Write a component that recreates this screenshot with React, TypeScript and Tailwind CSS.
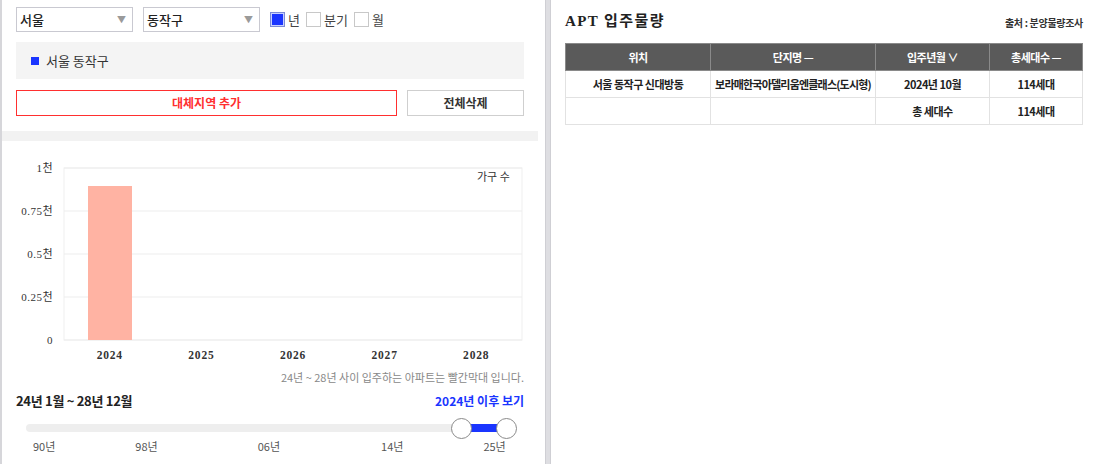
import { useState } from 'react';

const sans = "font-['Noto_Sans_CJK_KR','Noto_Sans',sans-serif]";

const years = ['2024', '2025', '2026', '2027', '2028'];
const yTicks = [
    { label: '1천', y: 27 },
    { label: '0.75천', y: 70 },
    { label: '0.5천', y: 113 },
    { label: '0.25천', y: 156 },
    { label: '0', y: 199 },
];

const Select = ({ value }: { value: string }) => (
    <div className="flex items-center justify-between w-[117px] h-[25px] border border-[#c9c9d1] bg-white pl-[3px] pr-[6px]">
        <span className="text-[13px] font-medium text-[#222]">{value}</span>
        <span className="text-[9px] text-[#9a9a9a]">▼</span>
    </div>
);

const Check = ({ label, checked }: { label: string; checked?: boolean }) => (
    <label className="flex items-center gap-[3px]">
        <span
            className={
                checked
                    ? 'w-[15px] h-[15px] border border-[#7b8bd6] bg-[#1a35ff] shadow-[inset_0_0_0_1px_#c9d0ff]'
                    : 'w-[15px] h-[15px] border border-[#c8c8c8] bg-white'
            }
        />
        <span className="text-[13px] text-[#444]">{label}</span>
    </label>
);

const Chart = () => (
    <svg width="545" height="224" className="block">
        <rect x="62" y="27" width="458" height="172" fill="#fff" stroke="#efefef" />
        {yTicks.map((t) => (
            <g key={t.label}>
                <line x1="62" x2="520" y1={t.y} y2={t.y} stroke="#ededed" />
                <text
                    x="51"
                    y={t.y + 4}
                    textAnchor="end"
                    fontSize="11"
                    fill="#333"
                    fontFamily="'Liberation Serif','Noto Sans CJK KR',serif"
                    letterSpacing="0.5"
                >
                    {t.label}
                </text>
            </g>
        ))}
        <rect x="86" y="45" width="44" height="154" fill="#ffb3a3" />
        <text x="475" y="40" fontSize="11" fill="#333" fontFamily="'Noto Sans CJK KR',sans-serif">
            가구 수
        </text>
        {years.map((y, i) => (
            <text
                key={y}
                x={62 + 45.8 + i * 91.6}
                y="218"
                textAnchor="middle"
                fontSize="11.5"
                fontWeight="bold"
                fill="#333"
                fontFamily="'Liberation Serif',serif"
                letterSpacing="0.8"
            >
                {y}
            </text>
        ))}
    </svg>
);

const RangeSlider = () => (
    <div className="relative ml-[10px] w-[490px] h-[8px] rounded-full bg-[#eeeeee]">
        <div className="absolute left-[435px] w-[45px] top-0 h-[8px] bg-[#1a35ff]" />
        <div className="absolute left-[425px] top-[-6px] w-[21px] h-[21px] rounded-full bg-white border-[1.5px] border-[#8a8a8a]" />
        <div className="absolute left-[470px] top-[-6px] w-[21px] h-[21px] rounded-full bg-white border-[1.5px] border-[#8a8a8a]" />
    </div>
);

export default function App() {
    const [rows] = useState([
        { loc: '서울 동작구 신대방동', name: '보라매한국아델리움엔클래스(도시형)', date: '2024년 10월', count: '114세대' },
    ]);

    return (
        <div className={`flex w-[1093px] h-[464px] overflow-hidden bg-white ${sans}`}>
            {/* left panel */}
            <div className="w-[545px] shrink-0 border-l-2 border-[#d6d6da]">
                <div className="px-[14px] pt-[7px]">
                    <div className="flex items-center">
                        <Select value="서울" />
                        <div className="ml-[10px]">
                            <Select value="동작구" />
                        </div>
                        <div className="flex items-center gap-[6px] ml-[10px]">
                            <Check label="년" checked />
                            <Check label="분기" />
                            <Check label="월" />
                        </div>
                    </div>

                    <div className="mt-[10px] w-[508px] h-[37px] bg-[#f4f4f4] flex items-center pl-[15px]">
                        <span className="w-[8px] h-[8px] bg-[#1a35ff]" />
                        <span className="ml-[7px] text-[13px] text-[#333]">서울 동작구</span>
                    </div>

                    <div className="mt-[11px] flex gap-[10px] w-[508px]">
                        <button className="w-[381px] h-[26px] border border-[#ff2f2f] bg-white text-[12px] font-bold text-[#ff2f2f]">
                            대체지역 추가
                        </button>
                        <button className="flex-1 h-[26px] border border-[#cfcfcf] bg-white text-[12px] font-bold text-[#333]">
                            전체삭제
                        </button>
                    </div>
                </div>

                <div className="mt-[15px] h-[10px] w-[536px] bg-[#f2f2f2]" />

                <Chart />

                <div className="pr-[21px] text-right text-[11px] text-[#888] leading-[14px] mt-[5px]">
                    24년 ~ 28년 사이 입주하는 아파트는 빨간막대 입니다.
                </div>

                <div className="px-[14px] mt-[7px] flex items-center justify-between w-[536px]">
                    <span className="text-[13px] font-bold text-[#222] tracking-[-0.3px]">24년 1월 ~ 28년 12월</span>
                    <span className="text-[12px] font-bold text-[#1a35ff]">2024년 이후 보기</span>
                </div>

                <div className="px-[14px] mt-[13px]">
                    <RangeSlider />
                </div>

                <div className="flex px-[14px] mt-[7px] text-[11px] text-[#555] leading-[14px]">
                    <span className="ml-[17px]">90년</span>
                    <span className="ml-[80px]">98년</span>
                    <span className="ml-[100px]">06년</span>
                    <span className="ml-[101px]">14년</span>
                    <span className="ml-[80px]">25년</span>
                </div>
            </div>

            {/* divider */}
            <div className="w-[6px] shrink-0 bg-[#dedee2] border-x border-[#cfcfd4]" />

            {/* right panel */}
            <div className="flex-1 pl-[14px] pr-[11px]">
                <div className="flex items-end justify-between h-[32px] pb-[1px]">
                    <h2 className="text-[15px] font-bold text-[#222] font-['Liberation_Serif','Noto_Sans_CJK_KR',serif] tracking-[1.4px] leading-[20px]">
                        APT 입주물량
                    </h2>
                    <span className="text-[10px] font-bold text-[#333] pb-[1px] tracking-[-0.3px]">출처 : 분양물량조사</span>
                </div>

                <table className="mt-[11px] w-[517px] border-collapse table-fixed text-[11px] tracking-[-0.5px]">
                    <colgroup>
                        <col className="w-[145px]" />
                        <col className="w-[165px]" />
                        <col className="w-[114px]" />
                        <col className="w-[93px]" />
                    </colgroup>
                    <thead>
                        <tr className="h-[27px] bg-[#5a5a5a] text-white font-bold">
                            <th className="border border-[#8a8a8a]">위치</th>
                            <th className="border border-[#8a8a8a]">단지명 —</th>
                            <th className="border border-[#8a8a8a]">입주년월 ∨</th>
                            <th className="border border-[#8a8a8a]">총세대수 —</th>
                        </tr>
                    </thead>
                    <tbody className="font-bold text-[#222] text-center whitespace-nowrap">
                        {rows.map((r) => (
                            <tr key={r.name} className="h-[27px]">
                                <td className="border border-[#e2e2e2]">{r.loc}</td>
                                <td className="border border-[#e2e2e2] tracking-[-0.8px]">{r.name}</td>
                                <td className="border border-[#e2e2e2]">{r.date}</td>
                                <td className="border border-[#e2e2e2]">{r.count}</td>
                            </tr>
                        ))}
                        <tr className="h-[27px]">
                            <td className="border border-[#e2e2e2]" />
                            <td className="border border-[#e2e2e2]" />
                            <td className="border border-[#e2e2e2]">총 세대수</td>
                            <td className="border border-[#e2e2e2]">114세대</td>
                        </tr>
                    </tbody>
                </table>
            </div>
        </div>
    );
}
